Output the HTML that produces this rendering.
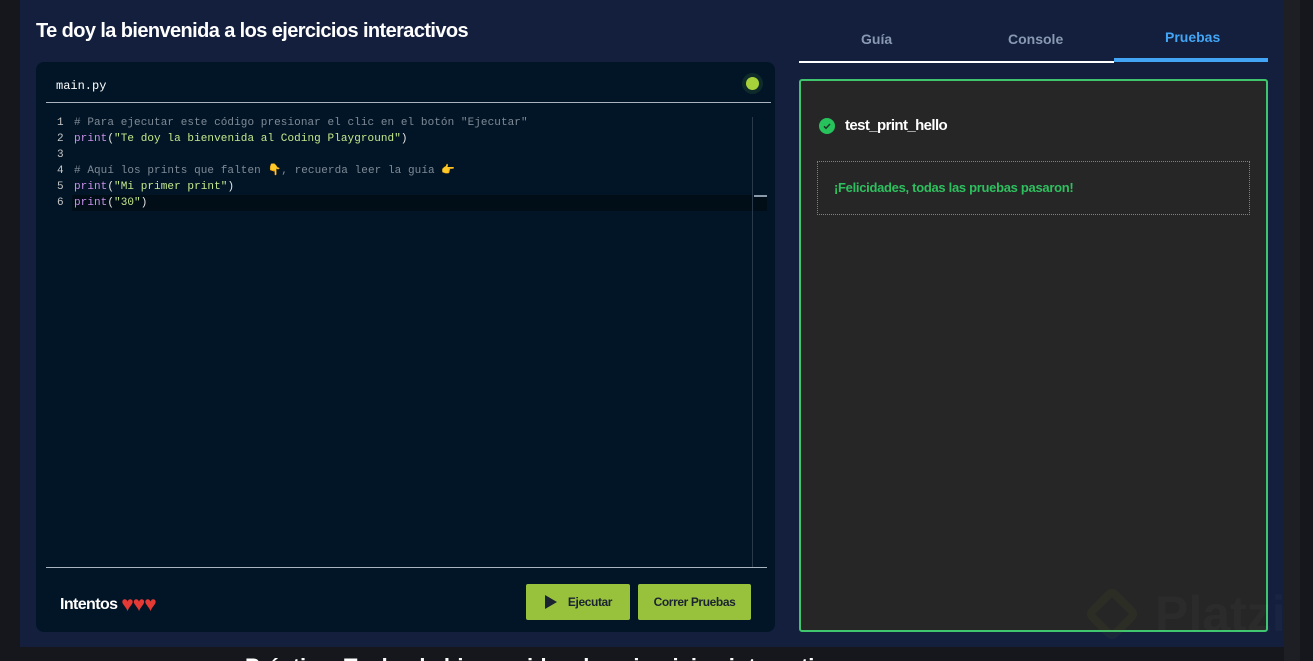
<!DOCTYPE html>
<html><head><meta charset="utf-8"><style>
*{margin:0;padding:0;box-sizing:border-box}
html,body{width:1313px;height:661px;overflow:hidden}
body{background:#16171c;font-family:"Liberation Sans",sans-serif;position:relative}
.main{position:absolute;left:20px;top:0;width:1264px;height:647px;background:#131f3d}
.strip{position:absolute;left:1284px;top:0;width:16px;height:661px;background:#1d1f24}
h1{position:absolute;left:36px;top:20px;color:#fff;font-size:20px;font-weight:bold;letter-spacing:-0.6px}
.ed{position:absolute;left:36px;top:62px;width:739px;height:570px;background:#021526;border-radius:8px}
.fname{position:absolute;left:20px;top:17px;color:#fff;font:12px "Liberation Mono",monospace}
.dot{position:absolute;left:710px;top:15px;width:13px;height:13px;border-radius:50%;background:#a7d13a;box-shadow:0 0 0 4px #0e2a2a}
.hr1{position:absolute;left:10px;top:40px;width:725px;height:1px;background:#a9b4c0}
.code{position:absolute;left:21px;top:53px;font:11px/16px "Liberation Mono","DejaVu Sans Mono",monospace;color:#e6e6e6;white-space:pre}
.ln{color:#c7c7c7;display:inline-block;width:17px}.c{color:#7f8a96}.k{color:#c792ea}.s{color:#c3e88d}
.t{letter-spacing:0.07px}
.curline{position:absolute;left:36px;top:133px;width:695px;height:16px;background:#010d17}
.vs{position:absolute;left:716px;top:55px;width:1px;height:450px;background:#2a3a4a}
.vm{position:absolute;left:718px;top:133px;width:13px;height:2px;background:#8a9aaa}
.hr2{position:absolute;left:10px;top:505px;width:721px;height:1px;background:#a9b4c0}
.int{position:absolute;left:24px;top:531px;color:#fff;font-size:16px;font-weight:bold;letter-spacing:-0.6px}
.int span{color:#e53935;font-size:21px;letter-spacing:-1px;vertical-align:-2px}
.btn{position:absolute;top:522px;height:36px;background:#98c23c;border-radius:2px;color:#1b2330;font-size:12px;font-weight:bold;display:flex;align-items:center;justify-content:center;letter-spacing:-0.4px}
.tab{position:absolute;top:31px;font-size:14px;font-weight:bold;color:#8a99b3}
.ul{position:absolute;left:799px;top:61px;width:315px;height:1.5px;background:#fff}
.ul2{position:absolute;left:1114px;top:58px;width:154px;height:4px;background:#42a5f5}
.pan{position:absolute;left:799px;top:79px;width:469px;height:553px;background:#262626;border:2px solid #3fc56e;border-radius:3px}
.chk{position:absolute;left:18px;top:37px;width:16px;height:16px;border-radius:50%;background:#27c25c}
.tn{position:absolute;left:44px;top:36px;color:#fff;font-size:15px;font-weight:bold;letter-spacing:-0.6px}
.box{position:absolute;left:16px;top:80px;width:433px;height:54px;border:1px dotted #3fa860}
.box div{position:absolute;left:16px;top:18px;color:#2ec05f;font-size:13px;font-weight:bold;letter-spacing:-0.3px}
.wm{position:absolute;left:1155px;top:585px;font-size:50px;color:rgba(255,255,255,0.025);font-weight:bold}
.wmi{position:absolute;left:1092px;top:594px;width:40px;height:40px;border:8px solid rgba(120,140,40,0.08);border-radius:8px;transform:rotate(45deg)}
.bot{position:absolute;left:245px;top:654px;color:#fff;font-size:22px;font-weight:bold;white-space:nowrap}
</style></head><body>
<div class="main"></div>
<div class="strip"></div>
<div class="bot">Práctica: Te doy la bienvenida a los ejercicios interactivos</div>
<h1>Te doy la bienvenida a los ejercicios interactivos</h1>
<div class="ed">
<div class="fname">main.py</div><div class="dot"></div><div class="hr1"></div>
<div class="curline"></div><div class="vs"></div><div class="vm"></div>
<div class="code"><span class="ln">1</span><span class="c t"># Para ejecutar este código presionar el clic en el botón "Ejecutar"</span>
<span class="ln">2</span><span class="t"><span class="k">print</span>(<span class="s">"Te doy la bienvenida al Coding Playground"</span>)</span>
<span class="ln">3</span>
<span class="ln">4</span><span class="c t"># Aquí los prints que falten 👇, recuerda leer la guía 👉</span>
<span class="ln">5</span><span class="t"><span class="k">print</span>(<span class="s">"Mi primer print"</span>)</span>
<span class="ln">6</span><span class="t"><span class="k">print</span>(<span class="s">"30"</span>)</span></div>
<div class="hr2"></div>
<div class="int">Intentos <span>♥♥♥</span></div>
<div class="btn" style="left:490px;width:104px"><svg width="14" height="16" viewBox="0 0 14 16" style="margin-right:10px"><path d="M1 1L13 8L1 15Z" fill="#1b2330"/></svg>Ejecutar</div>
<div class="btn" style="left:602px;width:113px">Correr Pruebas</div>
</div>
<div class="tab" style="left:861px">Guía</div>
<div class="tab" style="left:1008px">Console</div>
<div class="tab" style="left:1165px;top:29px;color:#42a5f5">Pruebas</div>
<div class="ul"></div><div class="ul2"></div>
<div class="pan">
<div class="chk"><svg width="16" height="16" viewBox="0 0 16 16"><path d="M5 8.3L7 10.3L11 6" stroke="#1a3a25" stroke-width="1.5" fill="none"/></svg></div>
<div class="tn">test_print_hello</div>
<div class="box"><div>¡Felicidades, todas las pruebas pasaron!</div></div>
</div>
<div class="wmi"></div><div class="wm">Platzi</div>
</body></html>
